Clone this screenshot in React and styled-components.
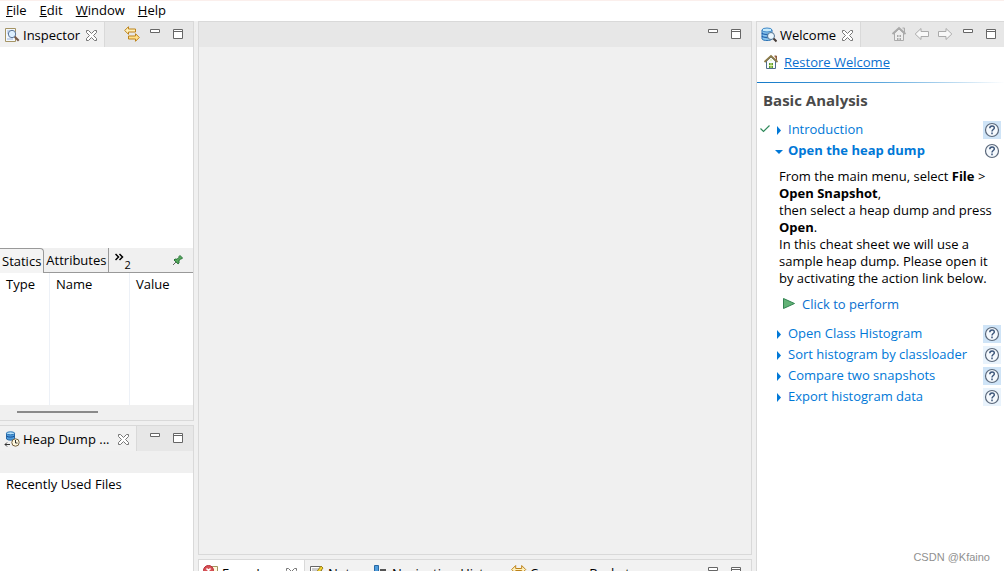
import styled, { createGlobalStyle } from "styled-components"

const GlobalStyle = createGlobalStyle`
  *{ box-sizing: border-box; }
  body{
    margin: 0;
    overflow: hidden;
    background-color: #f0f0f0;
    color: #000;
    font: 13px/17px "Open Sans", "Noto Sans", sans-serif;
  }
  button{
    border: 0;
    padding: 0;
    background: none;
    color: inherit;
    font: inherit;
  }
  svg{ display: block; flex: none; }
`

const Window = styled.div`
  position: relative;
  display: flex;
  flex-direction: column;
  height: 100vh;
`
const MenuBar = styled.nav`
  display: flex;
  flex: none;
  gap: 13px;
  height: 21px;
  padding: 0 6px 2px;
  background-color: #fff;
  border-top: 1px solid #fbefec;
`
const MenuButton = styled.button`
  line-height: 18px;
  &::first-letter{
    text-decoration: underline;
  }
`
const Workbench = styled.main`
  display: grid;
  flex: 1;
  min-height: 0;
  grid-template-columns: 194px minmax(0, 1fr) 248px;
  gap: 4px;
`
const Column = styled.div`
  display: flex;
  flex-direction: column;
  gap: 4px;
  min-width: 0;
  min-height: 0;
`
const Panel = styled.section`
  display: flex;
  flex-direction: column;
  flex: ${({$size})=> $size? `0 0 ${$size}px` : "1"};
  min-height: 0;
  overflow: hidden;
  border: solid #d9d9d9;
  border-width: ${({$edge})=>
    $edge === "left"? "1px 1px 1px 0" : $edge === "right"? "1px 0 0 1px" : "1px"};
  border-bottom-width: ${({$cut})=> $cut? "0" : "1px"};
  background-color: ${({$plain})=> $plain? "#f0f0f0" : "#fff"};
`
const PanelHeader = styled.header`
  display: flex;
  flex: none;
  height: 25px;
  background-color: ${({$light})=> $light? "#f2f2f2" : "#e7e7e7"};
`
const Tab = styled.div`
  display: flex;
  flex: none;
  align-items: center;
  gap: 3px;
  width: ${({$width})=> $width}px;
  padding: 1px 7px 0 4px;
  white-space: nowrap;
  background-color: ${({$active, $white})=> $white? "#fff" : $active? "#f1f1f1" : "transparent"};
  border-right: ${({$active})=> $active? "1px solid #d9d9d9" : "0"};
  & > button{
    margin-left: auto;
  }
`
const Tools = styled.div`
  display: flex;
  gap: 7px;
  margin-left: auto;
  padding: 4px ${({$end})=> $end || 7}px 0 0;
`
const IconButton = styled.button`
  width: 16px;
  height: 16px;
`
const CloseButton = styled.button`
  width: 11px;
  height: 11px;
`
const Blank = styled.div`
  flex: 1;
`
const SubTabs = styled.div`
  display: flex;
  flex: none;
  height: 25px;
  border-bottom: 1px solid #999;
  background-color: #f0f0f0;
`
const SubTab = styled.button`
  padding: 0 2px;
  border-right: 1px solid #999;
  ${({$active})=> $active && `
    margin-bottom: -1px;
    border-top: 1px solid #999;
    border-top-right-radius: 4px;
    background-color: #f4f4f4;
  `}
`
const MoreTabs = styled.button`
  display: flex;
  align-items: center;
  padding: 0 6px;
  & sub{
    font-size: 11px;
    line-height: 11px;
    align-self: flex-end;
    padding-bottom: 2px;
  }
`
const PinButton = styled(IconButton)`
  margin: 4px 7px 0 auto;
`
const Table = styled.table`
  flex: none;
  width: 100%;
  height: 132px;
  table-layout: fixed;
  border-collapse: separate;
  border-spacing: 0;
  & th{
    padding: 3px 6px;
    font-weight: normal;
    text-align: left;
    vertical-align: top;
    border-right: 1px solid #edf1f7;
  }
  & th:last-child{
    border-right: 0;
  }
`
const ScrollBar = styled.div`
  flex: none;
  height: 15px;
  padding: 6px 17px;
  background-color: #f0f0f0;
`
const ScrollThumb = styled.div`
  width: 81px;
  height: 2px;
  background-color: #8a8a8a;
`
const Gap = styled.div`
  flex: none;
  height: 22px;
  background-color: #f0f0f0;
`
const Recent = styled.p`
  margin: 0;
  padding: 3px 6px;
`
const Restore = styled.div`
  display: flex;
  flex: none;
  gap: 5px;
  height: 36px;
  padding: 7px 6px 0;
  border-bottom: 1px solid;
  border-image: linear-gradient(to right, #1379c8, #5ba6dc 50%, #fff) 1;
  & a{
    color: #0a6fd0;
  }
`
const Title = styled.h1`
  margin: 0;
  padding: 7px 6px 9px;
  color: #4a4a4a;
  font-size: 15px;
  line-height: 20px;
`
const Step = styled.div`
  display: grid;
  grid-template-columns: 14px 13px minmax(0, 1fr) 18px;
  align-items: center;
  height: 21px;
  padding: 0 3px 0 1px;
`
const StepLink = styled.button`
  grid-column: 3;
  padding-left: 3px;
  color: #0078d7;
  text-align: left;
  white-space: nowrap;
  font-weight: ${({$open})=> $open? "bold" : "normal"};
`
const Arrow = styled.span`
  grid-column: 2;
  justify-self: center;
`
const HelpButton = styled.button`
  grid-column: 4;
  display: grid;
  place-items: center;
  width: 18px;
  height: 18px;
  background-color: ${({$tone})=> $tone};
`
const StepText = styled.p`
  margin: 0;
  padding: 7px 12px 6px 22px;
`
const Perform = styled.button`
  display: flex;
  align-items: center;
  gap: 6px;
  height: 22px;
  margin-bottom: 8px;
  padding-left: 25px;
  color: #0a6fd0;
`
const Watermark = styled.span`
  position: absolute;
  right: 14px;
  bottom: 6px;
  color: #909090;
  font: 11px/16px "Liberation Sans", sans-serif;
`

const Svg = ({size = 16, children})=> (
  <svg width={size} height={size} viewBox={`0 0 ${size} ${size}`} fill="none" aria-hidden="true">{children}</svg>
)

const CloseIcon = ()=> (
  <Svg size={11}>
    <path d="M.5.5h2l3 3 3-3h2v2l-3 3 3 3v2h-2l-3-3-3 3h-2v-2l3-3-3-3z" stroke="#777" fill="#fff" />
  </Svg>
)
const MinIcon = ()=> (
  <Svg><path d="M3.5 3.5h9v3h-9z" fill="#fff" stroke="#666" /></Svg>
)
const MaxIcon = ()=> (
  <Svg><path d="M3.5 3.5h9v9h-9zM3.5 5.5h9" fill="#fff" stroke="#666" /></Svg>
)
const LinkIcon = ()=> (
  <Svg>
    <path d="M.7 4.5 4.5.7v2.3h7v3h-7v2.3z" fill="#fff0ba" stroke="#bd831b" />
    <path d="m15.3 11.5-3.8-3.8V10h-7v3h7v2.3z" fill="#ffe08a" stroke="#bd831b" />
  </Svg>
)
const InspectorIcon = ()=> (
  <Svg>
    <path d="M1.5 1.5h10v13h-10z" fill="#f4f9ff" stroke="#a59464" />
    <path d="M3 4h4M3 6h2M3 12h6" stroke="#9db6dd" />
    <circle cx="8" cy="7" r="3.7" fill="#dcefff" stroke="#5d7699" />
    <path d="m10.7 9.7 4 4" stroke="#765a49" strokeWidth="2" />
  </Svg>
)
const WelcomeIcon = ()=> (
  <Svg>
    <path d="M1 3v9c1 2 9 2 10 0V3z" fill="#8cc8ef" stroke="#2b73b5" />
    <ellipse cx="6" cy="3" rx="5" ry="2" fill="#c7eafb" stroke="#3d86c6" />
    <path d="M1 6c1 2 9 2 10 0M1 9c1 2 9 2 10 0" stroke="#2565ae" strokeWidth="1.3" />
    <circle cx="10" cy="9" r="3.5" fill="#eaf7ff" stroke="#557592" />
    <path d="m12.5 11.5 3 3" stroke="#473d38" strokeWidth="2" />
  </Svg>
)
const HeapIcon = ()=> (
  <Svg>
    <path d="M2.5 2v6c1 1.5 7 1.5 8 0V2z" fill="#4f9ddd" stroke="#2868a4" />
    <ellipse cx="6.5" cy="2.3" rx="4" ry="1.5" fill="#b8e3fb" stroke="#2b73b5" />
    <path d="M2.5 5c1 1.5 7 1.5 8 0" stroke="#174f98" />
    <circle cx="11.5" cy="11.5" r="3.7" fill="#fff9df" stroke="#75613f" />
    <path d="M11.5 9v3h2M6 13.5H1m2-2-2 2 2 2" stroke="#333" />
  </Svg>
)
const HomeIcon = ({gray})=> (
  <Svg>
    <path d="M11.5 2h2v4" fill={gray? "#ddd" : "#b66a47"} stroke={gray? "#aaa" : "#875e3e"} />
    <path d="M3.5 7v7.5h9V7L8 3z" fill={gray? "#eee" : "#f8fbff"} stroke={gray? "#aaa" : "#4e6c8b"} />
    <path d="m1.5 8 6.5-6 6.5 6" stroke={gray? "#aaa" : "#8c7b48"} strokeWidth="1.8" />
    <path d="M6 9h4v5H6z" fill={gray? "#aaa" : "#5d9b2f"} />
    <path d="M8 5v2M8 9v5M6 11.5h4" stroke={gray? "#eee" : "#d9ed9c"} />
  </Svg>
)
const BackIcon = ({forward})=> (
  <Svg>
    <path d="M1.2 8 7 2.5v3h7.5v5H7v3z" transform={forward? "matrix(-1 0 0 1 16 0)" : undefined} fill="#f8f8f8" stroke="#aaa" strokeLinejoin="round" />
  </Svg>
)
const PinIcon = ()=> (
  <Svg>
    <path d="m3 13 3-3" stroke="#666" />
    <path d="m4 8 1-1 2 .3 2-2L9 4.5l1-1L12.5 6l-1 1-1-.1-1.6 2 .2 2-1 1z" fill="#58a95d" stroke="#28743a" />
  </Svg>
)
const ErrorIcon = ()=> (
  <Svg>
    <path d="M7.5 1.5h7v13h-9" fill="#fff9dd" stroke="#a29561" />
    <circle cx="5.5" cy="5.5" r="5" fill="#d85155" stroke="#b52e38" />
    <path d="m3.5 3.5 4 4m0-4-4 4" stroke="#fff" strokeWidth="1.5" />
  </Svg>
)
const NotesIcon = ()=> (
  <Svg>
    <path d="M1.5 1.5h11v13h-11z" fill="#fff" stroke="#666" />
    <path d="M3 4h7M3 6h5M3 8h4" stroke="#999" />
    <path d="m6 9 6-8 2 2-6 8-3 1z" fill="#f3d32f" stroke="#987f20" />
  </Svg>
)
const HistoryIcon = ()=> (
  <Svg>
    <path d="M1.5.5h4v6h-4z" fill="#4f9ddd" stroke="#2868a4" />
    <path d="M7 4h6v5H7z" fill="#555" />
    <path d="M4 7v4h5" stroke="#555" />
  </Svg>
)
const CompareIcon = ()=> (
  <Svg>
    <path d="m.7 4.5 4-4v3h6v-3l4 4-4 4v-3h-6v3z" fill="#fff0ba" stroke="#bd831b" />
  </Svg>
)
const HelpIcon = ()=> (
  <Svg>
    <circle cx="8" cy="8" r="6.5" fill="#f5f9fd" stroke="#5a687b" strokeWidth="1.2" />
    <path d="M5.8 6.3c0-3 4.5-3 4.5-.4C10.3 7.5 8 7.5 8 9.4M8 10.6v1.6" stroke="#3c567a" strokeWidth="1.5" />
  </Svg>
)
const PlayIcon = ()=> (
  <Svg size={14}><path d="M1.5 1.5v10l11-5z" fill="#62b276" stroke="#338452" /></Svg>
)

function ViewTab({icon, name, width, active, white}){
  return(
    <Tab $width={width} $active={active} $white={white}>
      {icon}
      <span>{name}</span>
      {active?
        <CloseButton aria-label={`Close ${name}`}><CloseIcon /></CloseButton>
        : null
      }
    </Tab>
  )
}

function ViewTools({end, children}){
  return(
    <Tools $end={end}>
      {children}
      <IconButton aria-label="Minimize"><MinIcon /></IconButton>
      <IconButton aria-label="Maximize"><MaxIcon /></IconButton>
    </Tools>
  )
}

function CheatStep({name, open, done, tone}){
  return(
    <Step>
      {done? <Svg size={14}><path d="m2.5 5.5 3 3 6-6" stroke="#2f8a5b" strokeWidth="1.2" /></Svg> : null}
      <Arrow>
        <Svg size={10}>
          <path d={open? "M1 4h8L5 8z" : "M3 1v9l4-4.5z"} fill="#0078d7" />
        </Svg>
      </Arrow>
      <StepLink $open={open} aria-expanded={!!open}>{name}</StepLink>
      <HelpButton $tone={tone} aria-label={`Help for ${name}`}><HelpIcon /></HelpButton>
    </Step>
  )
}

const steps = [
  {name: "Open Class Histogram", tone: "#cfe4f7"},
  {name: "Sort histogram by classloader", tone: "#e9f3fc"},
  {name: "Compare two snapshots", tone: "#cfe4f7"},
  {name: "Export histogram data", tone: "#e9f3fc"},
]

function App(){
  return(
    <Window>
      <GlobalStyle />
      <MenuBar>
        {["File", "Edit", "Window", "Help"].map(menu=> <MenuButton key={menu}>{menu}</MenuButton>)}
      </MenuBar>
      <Workbench>
        <Column>
          <Panel $edge="left">
            <PanelHeader>
              <ViewTab icon={<InspectorIcon />} name="Inspector" width={105} active />
              <ViewTools>
                <IconButton aria-label="Link with snapshot"><LinkIcon /></IconButton>
              </ViewTools>
            </PanelHeader>
            <Blank />
            <SubTabs>
              <SubTab $active>Statics</SubTab>
              <SubTab>Attributes</SubTab>
              <MoreTabs aria-label="2 more tabs">
                <svg width="9" height="16" viewBox="0 0 9 16" fill="none"><path d="m.5 2 3 3-3 3m4-6 3 3-3 3" stroke="#000" strokeWidth="1.5" /></svg>
                <sub>2</sub>
              </MoreTabs>
              <PinButton aria-label="Pin tab"><PinIcon /></PinButton>
            </SubTabs>
            <Table>
              <colgroup>
                <col style={{width: 50}} />
                <col style={{width: 80}} />
                <col />
              </colgroup>
              <thead>
                <tr><th>Type</th><th>Name</th><th>Value</th></tr>
              </thead>
            </Table>
            <ScrollBar><ScrollThumb /></ScrollBar>
          </Panel>
          <Panel $edge="left" $size={146} $cut>
            <PanelHeader>
              <ViewTab icon={<HeapIcon />} name="Heap Dump ..." width={137} active />
              <ViewTools />
            </PanelHeader>
            <Gap />
            <Recent>Recently Used Files</Recent>
          </Panel>
        </Column>
        <Column>
          <Panel $plain>
            <PanelHeader><ViewTools /></PanelHeader>
          </Panel>
          <Panel $size={12} $cut>
            <PanelHeader $light>
              <ViewTab icon={<ErrorIcon />} name="Error Log" width={106} active white />
              <ViewTab icon={<NotesIcon />} name="Notes" width={64} />
              <ViewTab icon={<HistoryIcon />} name="Navigation History" width={138} />
              <ViewTab icon={<CompareIcon />} name="Compare Basket" width={130} />
              <ViewTools />
            </PanelHeader>
          </Panel>
        </Column>
        <Panel $edge="right" $cut>
          <PanelHeader>
            <ViewTab icon={<WelcomeIcon />} name="Welcome" width={104} active />
            <ViewTools end={5}>
              <IconButton aria-label="Home"><HomeIcon gray /></IconButton>
              <IconButton aria-label="Back"><BackIcon /></IconButton>
              <IconButton aria-label="Forward"><BackIcon forward /></IconButton>
            </ViewTools>
          </PanelHeader>
          <Restore>
            <HomeIcon />
            <a href="#welcome">Restore Welcome</a>
          </Restore>
          <Title>Basic Analysis</Title>
          <CheatStep name="Introduction" done tone="#cfe4f7" />
          <CheatStep name="Open the heap dump" open tone="#fff" />
          <StepText>
            From the main menu, select <b>File</b> &gt; <b>Open Snapshot</b>,<br />
            then select a heap dump and press <b>Open</b>.<br />
            In this cheat sheet we will use a sample heap dump. Please open it by activating the action link below.
          </StepText>
          <Perform><PlayIcon />Click to perform</Perform>
          {steps.map(step=> <CheatStep key={step.name} {...step} />)}
        </Panel>
      </Workbench>
      <Watermark>CSDN @Kfaino</Watermark>
    </Window>
  )
}
export default App;
